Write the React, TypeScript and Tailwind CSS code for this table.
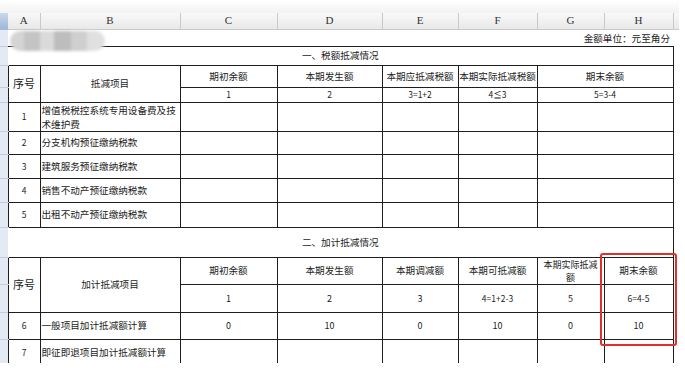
import React from "react";

const cols = [8, 32, 140, 97, 105, 76, 79, 67, 69, 6];
const letters = ["A", "B", "C", "D", "E", "F", "G", "H", ""];

const taxRows = [
  { no: "2", name: "分支机构预征缴纳税款", h: "h-[23px]" },
  { no: "3", name: "建筑服务预征缴纳税款", h: "h-[24px]" },
  { no: "4", name: "销售不动产预征缴纳税款", h: "h-[24px]" },
  { no: "5", name: "出租不动产预征缴纳税款", h: "h-[25px]" },
];

const Strip = ({ corner }: { corner?: boolean }) => (
  <td
    className={
      corner
        ? "p-0 bg-gradient-to-b from-[#c9d8ec] to-[#9fb7da] border-b border-[#a9bcd6]"
        : "p-0 bg-[#e3eaf4] border-b border-[#c3cedd]"
    }
  />
);

const cell = "border border-[#1e1e1e] p-0 text-center align-middle";
const num = "text-[8.5px]";

const App = () => {
  return (
    <div className="relative w-[685px] h-[372px] overflow-hidden bg-white text-[#1c1c1c] font-['Noto_Sans_CJK_SC','Liberation_Sans',sans-serif] text-[9.6px] leading-[11px]">
      <div className="h-[13px] bg-gradient-to-b from-white to-[#f2f2f2]" />
      <table className="table-fixed border-collapse">
        <colgroup>
          {cols.map((w, i) => (
            <col key={i} style={{ width: w }} />
          ))}
        </colgroup>
        <tbody>
          {/* spreadsheet column header */}
          <tr className="h-[16px]">
            <Strip corner />
            {letters.map((l, i) => (
              <td
                key={i}
                className="p-0 text-center bg-gradient-to-b from-[#f8f8f8] to-[#e8e8e8] border-r border-b border-[#c9c9c9] font-['Liberation_Serif',serif] text-[11px] text-[#333]"
              >
                {l}
              </td>
            ))}
          </tr>

          {/* title row */}
          <tr className="h-[17px]">
            <Strip />
            <td colSpan={8} className="p-0 relative">
              <div className="absolute left-[2px] top-[1px] w-[95px] h-[20px] rounded-full overflow-hidden flex blur-[1.5px]">
                <div className="w-[14px] bg-[#d4d4d4]" />
                <div className="w-[16px] bg-[#c4c4c4]" />
                <div className="w-[14px] bg-[#dadada]" />
                <div className="w-[17px] bg-[#bdbdbd]" />
                <div className="w-[16px] bg-[#cfcfcf]" />
                <div className="w-[18px] bg-[#e0e0e0]" />
              </div>
              <div className="text-right pr-[3px] pt-[1px]">金额单位：元至角分</div>
            </td>
            <td className="p-0" />
          </tr>

          {/* section one */}
          <tr className="h-[19px]">
            <Strip />
            <td colSpan={8} className="p-0 text-center border-t border-r border-[#1e1e1e]">
              一、税额抵减情况
            </td>
            <td className="p-0" />
          </tr>
          <tr className="h-[22px]">
            <Strip />
            <td rowSpan={2} className={cell + " text-[11px]"}>
              序号
            </td>
            <td rowSpan={2} className={cell}>
              抵减项目
            </td>
            <td className={cell}>期初余额</td>
            <td className={cell}>本期发生额</td>
            <td className={cell + " whitespace-nowrap"}>本期应抵减税额</td>
            <td className={cell + " whitespace-nowrap overflow-hidden"}>本期实际抵减税额</td>
            <td colSpan={2} className={cell}>
              期末余额
            </td>
            <td className="p-0" />
          </tr>
          <tr className="h-[15px]">
            <Strip />
            <td className={cell + " " + num}>1</td>
            <td className={cell + " " + num}>2</td>
            <td className={cell + " " + num}>3=1+2</td>
            <td className={cell + " " + num}>4≦3</td>
            <td colSpan={2} className={cell + " " + num}>
              5=3-4
            </td>
            <td className="p-0" />
          </tr>
          <tr className="h-[29px]">
            <Strip />
            <td className={cell + " " + num}>1</td>
            <td className={cell + " text-left pl-[1px] whitespace-nowrap leading-[14px]"}>
              增值税税控系统专用设备费及技
              <br />
              术维护费
            </td>
            <td className={cell} />
            <td className={cell} />
            <td className={cell} />
            <td className={cell} />
            <td colSpan={2} className={cell} />
            <td className="p-0" />
          </tr>
          {taxRows.map((r) => (
            <tr key={r.no} className={r.h}>
              <Strip />
              <td className={cell + " " + num}>{r.no}</td>
              <td className={cell + " text-left pl-[1px] whitespace-nowrap"}>{r.name}</td>
              <td className={cell} />
              <td className={cell} />
              <td className={cell} />
              <td className={cell} />
              <td colSpan={2} className={cell} />
              <td className="p-0" />
            </tr>
          ))}

          {/* section two */}
          <tr className="h-[30px]">
            <Strip />
            <td colSpan={8} className="p-0 text-center border-t border-r border-[#1e1e1e]">
              二、加计抵减情况
            </td>
            <td className="p-0" />
          </tr>
          <tr className="h-[27px]">
            <Strip />
            <td rowSpan={2} className={cell + " text-[11px]"}>
              序号
            </td>
            <td rowSpan={2} className={cell}>
              加计抵减项目
            </td>
            <td className={cell}>期初余额</td>
            <td className={cell}>本期发生额</td>
            <td className={cell}>本期调减额</td>
            <td className={cell}>本期可抵减额</td>
            <td className={cell + " text-[9px] leading-[13px]"}>
              本期实际抵减
              <br />
              额
            </td>
            <td className={cell}>期末余额</td>
            <td className="p-0" />
          </tr>
          <tr className="h-[28px]">
            <Strip />
            <td className={cell + " text-[9px]"}>1</td>
            <td className={cell + " text-[9px]"}>2</td>
            <td className={cell + " text-[9px]"}>3</td>
            <td className={cell + " text-[8.5px]"}>4=1+2-3</td>
            <td className={cell + " text-[9px]"}>5</td>
            <td className={cell + " text-[8.5px]"}>6=4-5</td>
            <td className="p-0" />
          </tr>
          <tr className="h-[27px]">
            <Strip />
            <td className={cell + " " + num}>6</td>
            <td className={cell + " text-left pl-[1px] whitespace-nowrap"}>一般项目加计抵减额计算</td>
            <td className={cell + " text-[9px]"}>0</td>
            <td className={cell + " text-[9px]"}>10</td>
            <td className={cell + " text-[9px]"}>0</td>
            <td className={cell + " text-[9px]"}>10</td>
            <td className={cell + " text-[9px]"}>0</td>
            <td className={cell + " text-[9px]"}>10</td>
            <td className="p-0" />
          </tr>
          <tr className="h-[26px]">
            <Strip />
            <td className={cell + " " + num}>7</td>
            <td className={cell + " text-left pl-[1px] whitespace-nowrap"}>即征即退项目加计抵减额计算</td>
            <td className={cell} />
            <td className={cell} />
            <td className={cell} />
            <td className={cell} />
            <td className={cell} />
            <td className={cell} />
            <td className="p-0" />
          </tr>
        </tbody>
      </table>

      <div className="absolute left-0 right-0 top-[363px] h-[9px] bg-white" />
      <div className="absolute top-0 bottom-0 left-[679px] right-0 bg-white" />

      {/* red highlight box */}
      <div className="absolute left-[600px] top-[253px] w-[77px] h-[93px] border-2 border-[#e0302c] rounded-[3px]" />
    </div>
  );
};

export default App;
